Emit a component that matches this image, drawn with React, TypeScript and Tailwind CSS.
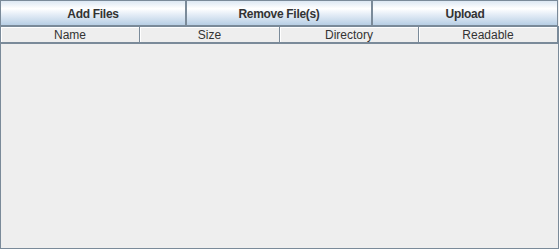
const buttons = ["Add Files", "Remove File(s)", "Upload"];

const columns = [
  { label: "Name", w: "w-[139px]" },
  { label: "Size", w: "w-[140px]" },
  { label: "Directory", w: "w-[139px]" },
  { label: "Readable", w: "w-[139px]" },
];

export default function App() {
  return (
    <div className="w-[559px] h-[249px] bg-[#eeeeee] flex flex-col font-['Liberation_Sans',Arial,sans-serif] text-[#333333] select-none">
      {/* toolbar buttons */}
      <div className="flex h-[26px] shrink-0">
        {buttons.map((b) => (
          <button
            key={b}
            className="w-[186px] h-full border border-[#7a8a99] bg-[linear-gradient(to_bottom,#dde8f3_0%,#ffffff_32%,#e6eef7_55%,#b8cfe5_100%)] flex items-center justify-center pt-[1px] text-[12px] font-bold tracking-[-0.3px] leading-none"
          >
            {b}
          </button>
        ))}
      </div>

      {/* file table */}
      <div className="flex-1 border border-[#7a8a99] flex flex-col">
        <div className="flex h-[17px] shrink-0 border-b-2 border-[#7a8a99]">
          {columns.map((c) => (
            <div
              key={c.label}
              className={`${c.w} h-full border-r border-[#7a8a99] shadow-[inset_1px_1px_0_#ffffff] flex items-center justify-center pt-[1px] text-[12px] leading-none`}
            >
              {c.label}
            </div>
          ))}
        </div>
        <div className="flex-1 bg-[#eeeeee]" />
      </div>
    </div>
  );
}
